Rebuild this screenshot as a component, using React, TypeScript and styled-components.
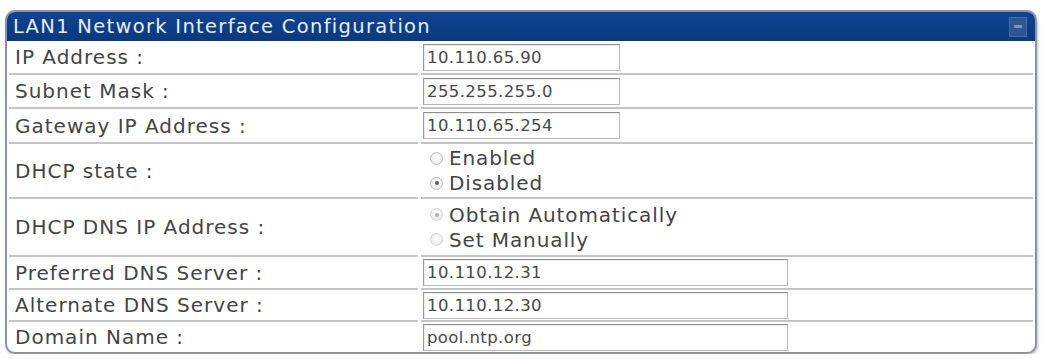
import React from "react";
import styled, { createGlobalStyle } from "styled-components";

const GlobalStyle = createGlobalStyle`
  html, body {
    margin: 0;
    padding: 0;
    background: #ffffff;
  }
  body {
    font-family: "DejaVu Sans", "Liberation Sans", sans-serif;
  }
`;

const Page = styled.div`
  width: 1042px;
  box-sizing: border-box;
  padding: 10px 5px 0 5px;
`;

const Panel = styled.div`
  border: 2px solid #8396ae;
  border-radius: 10px;
  overflow: hidden;
  background: #fff;
  box-shadow: 1px 2px 3px rgba(60, 70, 90, 0.3);
`;

const Header = styled.div`
  display: flex;
  align-items: center;
  justify-content: space-between;
  height: 29px;
  padding: 0 8px 0 6px;
  background: linear-gradient(#0f4391, #0a3a80);
  color: #e6eefa;
  font-size: 19.5px;
  letter-spacing: 1.3px;
`;

const MinButton = styled.span`
  position: relative;
  width: 16px;
  height: 18px;
  background: #30568f;
  border: 1px solid #476ba1;

  &::after {
    content: "";
    position: absolute;
    left: 4px;
    right: 4px;
    top: 7px;
    height: 3px;
    background: #7893bd;
  }
`;

const Body = styled.div`
  padding: 0 2px;
`;

const Row = styled.div<{ $h: number; $last?: boolean }>`
  display: grid;
  grid-template-columns: 409px 1fr;
  column-gap: 3px;
  height: ${(p) => p.$h}px;

  & > div {
    border-bottom: ${(p) => (p.$last ? "none" : "2px solid #c4c4c4")};
  }
`;

const LabelCell = styled.div`
  display: flex;
  align-items: center;
  padding-left: 6px;
  color: #444444;
  font-size: 20px;
  letter-spacing: 1px;
`;

const ValueCell = styled.div`
  display: flex;
  flex-direction: column;
  justify-content: center;
  padding-left: 2px;
`;

const TextBox = styled.input<{ $w: number }>`
  width: ${(p) => p.$w}px;
  height: 27px;
  box-sizing: border-box;
  border: 1px solid #b9b9b9;
  border-top-color: #8e8e8e;
  border-left-color: #9a9a9a;
  box-shadow: inset 1px 1px 1px rgba(0, 0, 0, 0.08);
  padding: 0 3px;
  font-family: "DejaVu Sans", "Liberation Sans", sans-serif;
  font-size: 16.5px;
  letter-spacing: 0.4px;
  color: #484848;
  background: #fff;
  outline: none;
`;

const RadioLine = styled.label`
  display: flex;
  align-items: center;
  gap: 6px;
  height: 25px;
  padding-left: 7px;
  color: #444444;
  font-size: 20px;
  letter-spacing: 0.9px;
`;

const RadioDot = styled.span<{ $checked?: boolean; $dim?: boolean }>`
  position: relative;
  width: 13px;
  height: 13px;
  box-sizing: border-box;
  border-radius: 50%;
  border: 1px solid ${(p) => (p.$dim ? "#d6d6d6" : "#bcbcbc")};
  background: radial-gradient(circle at 50% 40%, #ffffff, #e2e2e2);
  flex-shrink: 0;

  &::after {
    content: "";
    display: ${(p) => (p.$checked ? "block" : "none")};
    position: absolute;
    left: 3.5px;
    top: 3.5px;
    width: 4px;
    height: 4px;
    border-radius: 50%;
    background: ${(p) => (p.$dim ? "#b0b0b0" : "#5a5a5a")};
  }
`;

type Field =
  | { label: string; kind: "text"; value: string; width: number; h: number }
  | {
      label: string;
      kind: "radio";
      options: { text: string; checked?: boolean }[];
      dim?: boolean;
      h: number;
    };

const fields: Field[] = [
  { label: "IP Address :", kind: "text", value: "10.110.65.90", width: 197, h: 34 },
  { label: "Subnet Mask :", kind: "text", value: "255.255.255.0", width: 197, h: 34 },
  { label: "Gateway IP Address :", kind: "text", value: "10.110.65.254", width: 197, h: 35 },
  {
    label: "DHCP state :",
    kind: "radio",
    options: [{ text: "Enabled" }, { text: "Disabled", checked: true }],
    h: 55,
  },
  {
    label: "DHCP DNS IP Address :",
    kind: "radio",
    dim: true,
    options: [{ text: "Obtain Automatically", checked: true }, { text: "Set Manually" }],
    h: 58,
  },
  { label: "Preferred DNS Server :", kind: "text", value: "10.110.12.31", width: 365, h: 33 },
  { label: "Alternate DNS Server :", kind: "text", value: "10.110.12.30", width: 365, h: 32 },
  { label: "Domain Name :", kind: "text", value: "pool.ntp.org", width: 365, h: 30 },
];

const App = () => {
  return (
    <Page>
      <GlobalStyle />
      <Panel>
        <Header>
          <span>LAN1 Network Interface Configuration</span>
          <MinButton />
        </Header>
        <Body>
          {fields.map((f, i) => (
            <Row key={f.label} $h={f.h} $last={i === fields.length - 1}>
              <LabelCell>{f.label}</LabelCell>
              <ValueCell>
                {f.kind === "text" ? (
                  <TextBox $w={f.width} value={f.value} readOnly />
                ) : (
                  f.options.map((o) => (
                    <RadioLine key={o.text}>
                      <RadioDot $checked={o.checked} $dim={f.dim} />
                      {o.text}
                    </RadioLine>
                  ))
                )}
              </ValueCell>
            </Row>
          ))}
        </Body>
      </Panel>
    </Page>
  );
};

export default App;
